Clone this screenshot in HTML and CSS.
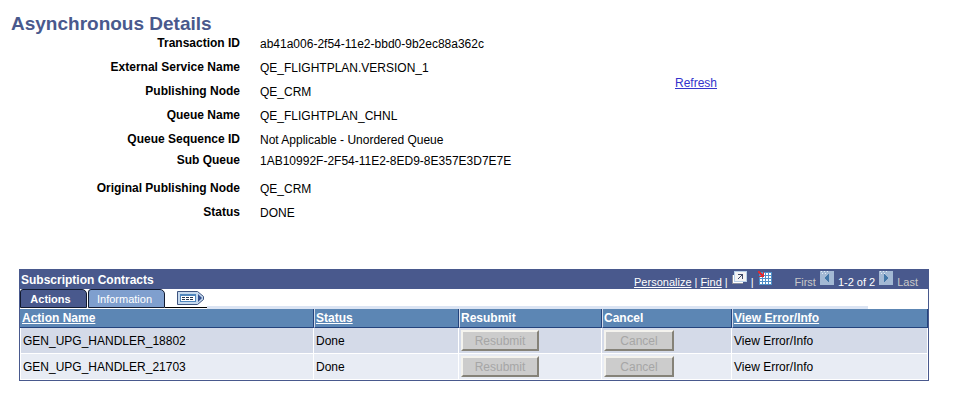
FILE: index.html
```html
<!DOCTYPE html>
<html lang="en">
<head>
  <meta charset="utf-8">
  <title>Asynchronous Details</title>
  <link rel="stylesheet" href="styles.css">
</head>
<body>
  <h1>Asynchronous Details</h1>

  <div class="summary">
    <dl class="details">
      <dt>Transaction ID</dt>
      <dd>ab41a006-2f54-11e2-bbd0-9b2ec88a362c</dd>
      <dt>External Service Name</dt>
      <dd>QE_FLIGHTPLAN.VERSION_1</dd>
      <dt>Publishing Node</dt>
      <dd>QE_CRM</dd>
      <dt>Queue Name</dt>
      <dd>QE_FLIGHTPLAN_CHNL</dd>
      <dt>Queue Sequence ID</dt>
      <dd>Not Applicable - Unordered Queue</dd>
      <dt>Sub Queue</dt>
      <dd>1AB10992F-2F54-11E2-8ED9-8E357E3D7E7E</dd>
      <dt>Original Publishing Node</dt>
      <dd>QE_CRM</dd>
      <dt>Status</dt>
      <dd>DONE</dd>
    </dl>
    <a class="refresh" href="#">Refresh</a>
  </div>

  <div class="grid">
    <div class="grid-bar">
      <h2>Subscription Contracts</h2>
      <div class="tools">
        <a href="#">Personalize</a>
        <span>|</span>
        <a href="#">Find</a>
        <span>|</span>
        <a class="icon" href="#" aria-label="View in new window">
          <svg width="15" height="14" viewBox="0 0 15 14" shape-rendering="crispEdges">
            <path d="M0 4h2v8h9v1H0z" fill="#8a8f9c"/>
            <path d="M1 4h1v7h9v1H1z" fill="#fff"/>
            <path d="M2 0h13v11H2z" fill="#b8d0e8"/>
            <path d="M3 1h11v9H3z" fill="#f4f4f4"/>
            <path d="M6 3h5v5h-1V5H9v1H8v1H7v1H6V7h1V6h1V5h1V4H6z" fill="#404a68"/>
          </svg>
        </a>
        <span>|</span>
        <a class="icon" href="#" aria-label="Download">
          <svg width="14" height="14" viewBox="0 0 14 14" shape-rendering="crispEdges">
            <path d="M1 1h13v13H1z" fill="#4f8fc8"/>
            <path d="M2 2h2v2H2zM5 2h2v2H5zM8 2h2v2H8zM11 2h2v2h-2zM2 5h2v2H2zM5 5h2v2H5zM8 5h2v2H8zM11 5h2v2h-2zM2 8h2v2H2zM5 8h2v2H5zM8 8h2v2H8zM11 8h2v2h-2zM2 11h2v2H2zM5 11h2v2H5zM8 11h2v2H8zM11 11h2v2h-2z" fill="#fff"/>
            <path d="M0 0h2v1h1v1h1v1h1V1h1v5H1V5h2V4H2V3H1V2H0z" fill="#e02a32"/>
          </svg>
        </a>
      </div>
      <div class="pager">
        <span>First</span>
        <svg class="icon" width="14" height="16" viewBox="0 -2 14 16" shape-rendering="crispEdges">
          <path d="M0 0h14v14H0z" fill="#a3b9d4"/>
          <path d="M1 0h1v1H1zM4 0h1v1H4zM7 0h1v1H7zM2 2h1v1H2zM5 2h1v1H5z" fill="#e4ecf5"/>
          <path d="M9 3v8H8v-1H7V9H6V8H5V6h1V5h1V4h1V3z" fill="#4377a8"/>
        </svg>
        <span class="range">1-2 of 2</span>
        <svg class="icon" width="14" height="16" viewBox="0 -2 14 16" shape-rendering="crispEdges">
          <path d="M0 0h14v14H0z" fill="#a3b9d4"/>
          <path d="M1 0h1v1H1zM4 0h1v1H4zM7 0h1v1H7zM2 2h1v1H2zM5 2h1v1H5z" fill="#e4ecf5"/>
          <path d="M5 3v8h1v-1h1V9h1V8h1V6H8V5H7V4H6V3z" fill="#4377a8"/>
        </svg>
        <span>Last</span>
      </div>
    </div>

    <div class="tabs">
      <button class="tab active" type="button">Actions</button>
      <button class="tab" type="button">Information</button>
      <button class="show-all" type="button" aria-label="Show all columns">
        <svg width="28" height="14" viewBox="0 0 28 14">
          <path d="M.5.5h20l6 5v3l-6 5H.5z" fill="#c5d9ee" stroke="#3f5580"/>
          <g shape-rendering="crispEdges">
            <path d="M3 3h16v8H3z" fill="#fff"/>
            <path d="M3 3h16v2H3z" fill="#4f86bd"/>
            <path d="M3 3h1v8H3zM18 3h1v8h-1zM3 10h16v1H3z" fill="#4f86bd"/>
            <path d="M5 6h3v1H5zM9 6h3v1H9zM13 6h3v1h-3zM5 8h3v1H5zM9 8h3v1H9zM13 8h3v1h-3z" fill="#26364f"/>
          </g>
          <path d="M21 3v8l4-4z" fill="#34508f"/>
        </svg>
      </button>
      <div class="tab-line"></div>
    </div>

    <table>
      <colgroup>
        <col class="col-name">
        <col class="col-status">
        <col class="col-resubmit">
        <col class="col-cancel">
        <col>
      </colgroup>
      <thead>
        <tr>
          <th><a href="#">Action Name</a></th>
          <th><a href="#">Status</a></th>
          <th>Resubmit</th>
          <th>Cancel</th>
          <th><a href="#">View Error/Info</a></th>
        </tr>
      </thead>
      <tbody>
        <tr>
          <td>GEN_UPG_HANDLER_18802</td>
          <td>Done</td>
          <td><button class="btn btn-resubmit" type="button" disabled>Resubmit</button></td>
          <td><button class="btn" type="button" disabled>Cancel</button></td>
          <td>View Error/Info</td>
        </tr>
        <tr>
          <td>GEN_UPG_HANDLER_21703</td>
          <td>Done</td>
          <td><button class="btn btn-resubmit" type="button" disabled>Resubmit</button></td>
          <td><button class="btn" type="button" disabled>Cancel</button></td>
          <td>View Error/Info</td>
        </tr>
      </tbody>
    </table>
  </div>
</body>
</html>
```

FILE: styles.css
```css
body {
  margin: 0;
  padding: 12px 29px 24px 19px;
  background: #fff;
  color: #000;
  font: 12px/16px "Liberation Sans", Arial, sans-serif;
}
h1 {
  margin: 0 0 0 -8px;
  color: #49598d;
  font-size: 19px;
  line-height: 24px;
}
.summary {
  display: flex;
  align-items: flex-start;
  padding-bottom: 40px;
}
.details {
  display: grid;
  grid-template-columns: 221px 415px;
  grid-template-rows: repeat(4, 24px) 21px 28px 24px 24px;
  column-gap: 20px;
  margin: 0;
}
.details dt {
  font-weight: bold;
  text-align: right;
  line-height: 14px;
}
.details dd {
  margin: 0;
}
.refresh {
  margin-top: 39px;
  color: #3333cc;
}

/* subscription grid */
.grid {
  border: 1px solid #49598d;
  border-top: 0;
}
.grid-bar {
  display: flex;
  height: 20px;
  background: #49598d;
  color: #fff;
  font-size: 11px;
  line-height: 26px;
}
.grid-bar h2 {
  flex: 1;
  margin: 0;
  padding-left: 1px;
  font-size: 12px;
  line-height: 22px;
}
.grid-bar a {
  color: #fff;
}
.tools,
.pager {
  display: flex;
}
.tools {
  gap: 3px;
}
.tools .icon {
  padding: 2px 1px 0;
  line-height: 0;
}
.pager {
  gap: 4px;
  margin: 0 10px 0 22px;
  color: #c8c8c8;
}
.pager .range {
  color: #fff;
}

.tabs {
  display: flex;
  align-items: flex-end;
  height: 20px;
  background: #fff;
}
.tab {
  height: 19px;
  align-self: flex-start;
  width: 77px;
  margin: 0 0 0 1px;
  padding: 0 4px 0 0;
  border: 1px solid #111a30;
  border-radius: 3px 5px 0 0;
  background: #7f9fce;
  color: #fff;
  font: 11px/16px "Liberation Sans", Arial, sans-serif;
}
.tab.active {
  width: 67px;
  margin-left: 0;
  padding-right: 6px;
  background: #49598d;
  font-weight: bold;
}
.show-all {
  align-self: flex-start;
  height: 19px;
  padding: 2px 2px 2px 12px;
  border: 0;
  border-bottom: 1px solid #000;
  background: none;
  line-height: 0;
}
.tab-line {
  flex: 1;
  height: 3px;
  margin-right: 60px;
  background: #dbe4f3;
}

table {
  width: 100%;
  table-layout: fixed;
  border-collapse: separate;
  border-spacing: 0;
}
.col-name {
  width: 294px;
}
.col-status {
  width: 145px;
}
.col-resubmit {
  width: 143px;
}
.col-cancel {
  width: 130px;
}
th {
  height: 19px;
  box-sizing: border-box;
  padding: 0 2px;
  border-right: 1px solid #24437c;
  border-bottom: 1px solid #24437c;
  background: #5c86b4;
  color: #fff;
  font-size: 12px;
  line-height: 18px;
  text-align: left;
}
th + th {
  border-left: 1px solid #d5dceb;
  padding-left: 1px;
}
th a {
  color: #fff;
}
td {
  height: 26px;
  box-sizing: border-box;
  padding: 0 2px;
  border-right: 1px solid #fff;
  border-bottom: 1px solid #fff;
  background: #e8ecf4;
}
td:first-child {
  border-left: 1px solid #fff;
}
tbody tr:first-child td {
  background: #d4dae8;
}
.btn {
  display: block;
  width: 70px;
  height: 21px;
  padding: 0;
  border: 2px solid;
  border-color: #f4f3ee #858278 #858278 #f4f3ee;
  background: #cccccc;
  color: #a6a6a6;
  font: 12px/16px "Liberation Sans", Arial, sans-serif;
}
.btn-resubmit {
  width: 78px;
}
```
